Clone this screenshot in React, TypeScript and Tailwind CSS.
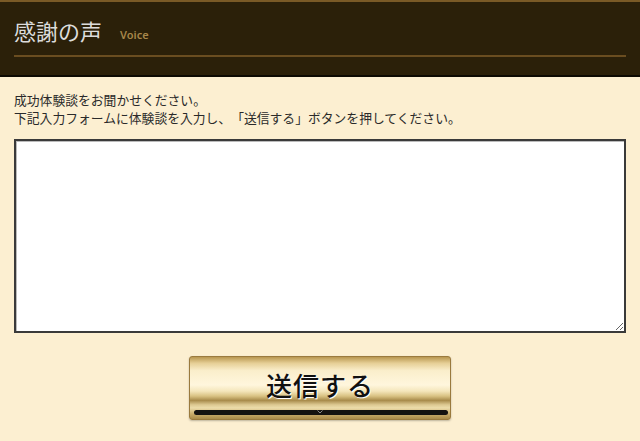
export default function App() {
  return (
    <div className="min-h-[441px] w-[640px] bg-[#fcefd1] font-['Noto_Sans_CJK_JP',sans-serif] text-[#333]">
      <header className="h-[77px] border-t-[2px] border-t-[#7a5a26] border-b-[2px] border-b-[#0d0a03] bg-[#2b2009] px-[14px]">
        <div className="flex h-[53px] items-center gap-[18px] pt-[3px]">
          <h1 className="text-[22px] leading-none font-normal text-[#dcdcdc]">感謝の声</h1>
          <span className="mt-[8px] font-['Noto_Sans',sans-serif] text-[11px] leading-none font-semibold text-[#a6864a]">Voice</span>
        </div>
        <div className="h-[2px] w-[612px] bg-[#6a4d20]" />
      </header>

      <main className="px-[14px] pt-[14px]">
        <p className="text-[12.8px] leading-[18px] text-[#2a2a2a] [text-spacing-trim:space-all]">
          成功体験談をお聞かせください。
          <br />
          下記入力フォームに体験談を入力し、「送信する」ボタンを押してください。
        </p>
        <textarea className="mt-[12px] block h-[194px] w-[612px] border-[2px] border-[#3a3a3a] bg-white shadow-[inset_1px_1px_0_#bbb]" />

        <div className="flex justify-center pt-[23px]">
          <button className="relative flex h-[64px] w-[262px] items-start justify-center rounded-[3px] border border-[#9a7a3e] bg-[linear-gradient(to_bottom,#b8964f_0%,#e6cf96_10%,#faeecb_22%,#fff6dd_45%,#f4e6bb_55%,#d9c283_63%,#a88b4b_70%,#dcc891_77%,#ecdcaa_82%,#c8ab6a_92%,#a98a48_100%)] shadow-[0_1px_2px_rgba(0,0,0,0.25)]">
            <span className="mt-[12px] text-[26px] leading-[32px] font-medium tracking-[1px] text-[#111] [text-shadow:1px_1px_0_#fff]">
              送信する
            </span>
            <span className="absolute bottom-[4px] left-[4px] right-[2px] h-[5px] rounded-full bg-[#141210]" />
            <svg className="absolute bottom-[5px] left-1/2 -translate-x-1/2" width="6" height="4" viewBox="0 0 6 4">
              <path d="M0.5 0.5 L3 3 L5.5 0.5" stroke="#8a8a8a" strokeWidth="1" fill="none" />
            </svg>
          </button>
        </div>
      </main>
    </div>
  );
}
